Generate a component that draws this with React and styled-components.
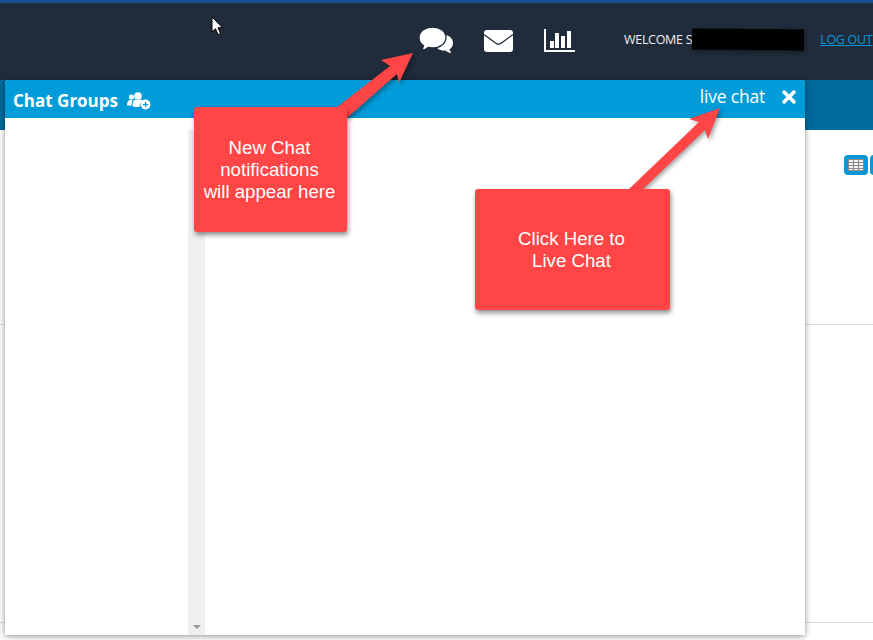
import React from 'react';
import styled, { createGlobalStyle } from 'styled-components';
import { FaTimes } from 'react-icons/fa';

const GlobalStyle = createGlobalStyle`
  html, body {
    margin: 0;
    padding: 0;
    background: #fff;
  }
  * {
    box-sizing: border-box;
  }
`;

const Page = styled.div`
  position: relative;
  width: 873px;
  height: 640px;
  overflow: hidden;
  background: #fff;
  font-family: "Open Sans", "Noto Sans", sans-serif;
`;

const TopStrip = styled.div`
  height: 3px;
  background: #174f95;
`;

const Header = styled.header`
  display: flex;
  align-items: center;
  height: 77px;
  padding: 0 0 2px 419px;
  background: #202c3b;
  color: #fff;
  white-space: nowrap;
`;

const NavIcon = styled.span`
  display: flex;
  width: ${p => p.$width}px;
  margin-right: ${p => p.$gap}px;
  color: #fff;
`;

const Welcome = styled.span`
  margin-bottom: 3px;
  font-family: "Open Sans", sans-serif;
  font-size: 12.5px;
  font-weight: 500;
  letter-spacing: -0.3px;
  color: #f0f0f0;
`;

const Redacted = styled.span`
  display: block;
  flex: none;
  width: 112px;
  height: 21px;
  margin: 0 16px 3px 0;
  background: #000;
  box-shadow: 1px 2px 4px rgba(0, 0, 0, 0.4);
  transform: rotate(0.4deg);
`;

const LogOut = styled.a`
  margin-bottom: 3px;
  font-size: 12.5px;
  letter-spacing: -0.3px;
  color: #0c96d6;
  text-decoration: underline;
`;

const SubBar = styled.div`
  height: 50px;
  background: #006a9c;
`;

const Toolbar = styled.div`
  display: flex;
  gap: 2px;
  height: 195px;
  padding: 25px 0 0 844px;
  border-bottom: 1px solid #d9dee4;
`;

const ToolButton = styled.span`
  display: flex;
  flex: none;
  align-items: center;
  justify-content: center;
  width: 24px;
  height: 20px;
  border-radius: 4px;
  background: #0c96d6;
`;

const ContentRow = styled.div`
  height: 298px;
  border-bottom: 1px solid #d5dee8;
`;

const Modal = styled.section`
  position: absolute;
  top: 80px;
  left: 5px;
  display: flex;
  flex-direction: column;
  width: 800px;
  height: 555px;
  border-radius: 4px 4px 0 0;
  background: #fff;
  box-shadow: 0 1px 6px rgba(0, 0, 0, 0.45);
`;

const ModalHeader = styled.div`
  display: flex;
  flex: none;
  align-items: center;
  justify-content: space-between;
  height: 38px;
  padding: 0 6px 0 8px;
  border-radius: 4px 4px 0 0;
  background: #009bd9;
  color: #fff;
`;

const GroupsTitle = styled.div`
  display: flex;
  align-items: center;
  gap: 9px;
  padding-top: 3px;
  font-size: 17px;
  font-weight: 700;
`;

const LiveChat = styled.div`
  display: flex;
  align-items: center;
  gap: 14px;
  margin-top: -4px;
  font-size: 17.5px;
  letter-spacing: -0.2px;
`;

const LiveLabel = styled.span`
  margin-bottom: 3px;
`;

const ModalBody = styled.div`
  display: flex;
  flex: 1;
  min-height: 0;
`;

const GroupList = styled.div`
  width: 183px;
`;

const ScrollTrack = styled.div`
  display: flex;
  align-items: flex-end;
  justify-content: center;
  width: 17px;
  margin-top: 12px;
  padding-bottom: 6px;
  background: #f0f0f0;
`;

const ScrollArrow = styled.span`
  display: block;
  width: 0;
  height: 0;
  border-left: 4px solid transparent;
  border-right: 4px solid transparent;
  border-top: 4px solid #999;
`;

const Callout = styled.div`
  position: absolute;
  top: ${p => p.$top}px;
  left: ${p => p.$left}px;
  display: flex;
  align-items: center;
  justify-content: center;
  width: ${p => p.$width}px;
  height: ${p => p.$height}px;
  padding-right: 2px;
  border-radius: 3px;
  background: #ff4545;
  box-shadow: 1px 3px 5px rgba(0, 0, 0, 0.45);
  color: #fff;
  font-family: "Liberation Sans", Arial, sans-serif;
  font-size: 18.67px;
  line-height: 22px;
  text-align: center;
`;

const Overlay = styled.svg`
  position: absolute;
  top: 0;
  left: 0;
  filter: drop-shadow(2px 2px 2px rgba(0, 0, 0, 0.35));
`;

const CursorMark = styled.svg`
  position: absolute;
  top: 16px;
  left: 211px;
`;

const CommentsIcon = () => (
  <svg width="34" height="27" viewBox="0 0 34 27" fill="#fff">
    <path d="M25 8c5 0 9 3.500 9 8 0 2.800-1.500 5-3.500 6.300.3 1.500 1 2.700 2 3.700-2.500 0-4.500-1-6-2.400-3 .3-6-.3-8-2z" />
    <path
      d="M13.500 0C21 0 27 4.700 27 10.500S21 21 13.500 21c-1.500 0-3-.2-4.300-.5C7 22.300 4.500 23.200 2 23.200c1.300-1.200 2.200-2.700 2.500-4.400C1.800 16.800 0 13.900 0 10.500 0 4.700 6 0 13.500 0z"
      stroke="#202c3b"
      strokeWidth="1.300"
    />
  </svg>
);

const EnvelopeIcon = () => (
  <svg width="29" height="22" viewBox="0 0 29 22">
    <rect width="29" height="22" rx="3" fill="#fff" />
    <path d="M0 4.500l11.500 8.500c1.800 1.300 4.200 1.300 6 0L29 4.500" fill="none" stroke="#202c3b" strokeWidth="1.300" />
  </svg>
);

const ChartIcon = () => (
  <svg width="31" height="23" viewBox="0 0 31 23" fill="#fff">
    <path d="M0 0h2v21h29v2H0z" />
    <path d="M6 12h4v7H6zM11 4h4v15h-4zM17 7h4v12h-4zM23 2h4v17h-4z" />
  </svg>
);

const GridIcon = () => (
  <svg width="16" height="12" viewBox="0 0 16 12">
    <rect width="16" height="12" fill="#f4f4f4" />
    <path d="M0 .5h16M0 3.500h16M0 6.500h16M0 9.500h16M0 11.500h16M.5 0v12M5.500 0v12M10.500 0v12M15.500 0v12" stroke="#8a8a8a" fill="none" />
  </svg>
);

const GroupAddIcon = () => (
  <svg width="24" height="18" viewBox="0 0 24 18" fill="#fff">
    <circle cx="4.500" cy="5" r="2.600" />
    <path d="M0 13c0-3.500 1.500-5 3.500-5 1 0 1.500.3 2 .8C4.800 10 4.500 11.500 4.500 13.500H1.500C.6 13.500 0 13.500 0 13z" />
    <circle cx="11" cy="4" r="3.800" />
    <path d="M5.500 13c0-3.500 1.800-5.500 3-5.500 1 .8 4 .8 5 0 1 0 1.800.7 2.300 1.700A6 6 0 0 0 12.500 15H7.500C6.200 15 5.500 14.300 5.500 13z" />
    <circle cx="18.500" cy="12.500" r="5" />
    <path d="M18 10h1.200v2h2v1.200h-2v2H18v-2h-2V12h2z" fill="#009bd9" />
  </svg>
);

export default function App() {
  return (
    <Page>
      <GlobalStyle />
      <TopStrip />
      <Header>
        <NavIcon $width={34} $gap={31}><CommentsIcon /></NavIcon>
        <NavIcon $width={29} $gap={31}><EnvelopeIcon /></NavIcon>
        <NavIcon $width={31} $gap={49}><ChartIcon /></NavIcon>
        <Welcome>WELCOME S</Welcome>
        <Redacted />
        <LogOut>LOG OUT</LogOut>
      </Header>
      <SubBar />
      <Toolbar>
        <ToolButton><GridIcon /></ToolButton>
        <ToolButton />
      </Toolbar>
      <ContentRow />

      <Modal>
        <ModalHeader>
          <GroupsTitle>
            Chat Groups
            <GroupAddIcon />
          </GroupsTitle>
          <LiveChat>
            <LiveLabel>live chat</LiveLabel>
            <FaTimes size={20} />
          </LiveChat>
        </ModalHeader>
        <ModalBody>
          <GroupList />
          <ScrollTrack><ScrollArrow /></ScrollTrack>
        </ModalBody>
      </Modal>

      <Overlay width="873" height="640" viewBox="0 0 873 640">
        <polygon fill="#ff4545" points="413,53 381,60 390,66 336,108 347,118 397,74 399,83" />
        <polygon fill="#ff4545" points="720,108 689,119 699,122 628,190 642,190 705,130 708,139" />
      </Overlay>

      <Callout $top={107} $left={194} $width={153} $height={125}>
        New Chat<br />notifications<br />will appear here
      </Callout>
      <Callout $top={189} $left={475} $width={195} $height={121}>
        Click Here to<br />Live Chat
      </Callout>

      <CursorMark width="13" height="21" viewBox="0 0 13 21">
        <path d="M1 1v15l3.500-3.300 2.500 6 2.500-1-2.500-6h4.500z" fill="#fff" stroke="#000" />
      </CursorMark>
    </Page>
  );
}
